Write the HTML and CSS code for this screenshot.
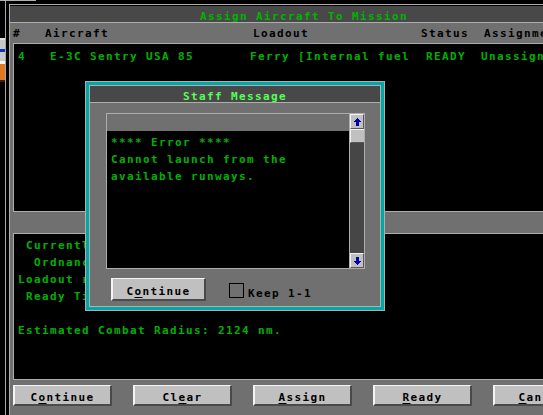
FILE: index.html
```html
<!DOCTYPE html>
<html>
<head>
<meta charset="utf-8">
<title>Assign Aircraft To Mission</title>
<link rel="stylesheet" href="styles.css">
</head>
<body>
<div class="desk">
  <div class="bgline"></div>
  <div class="bgwin">
    <div class="bgwin-panel">
      <div class="bgwin-blue"></div>
      <div class="bgwin-icon"></div>
    </div>
  </div>

  <div class="win">
    <div class="win-title">Assign Aircraft To Mission</div>
    <div class="win-body">
      <div class="head">
        <span>#</span><span>Aircraft</span><span>Loadout</span><span>Status</span><span>Assignment</span>
      </div>
      <div class="list">
        <div class="row">
          <span>4</span><span>E-3C Sentry USA 85</span><span>Ferry [Internal fuel</span><span>READY</span><span>Unassigned</span>
        </div>
      </div>
      <div class="band"></div>
      <div class="info">
        <div class="line"> Currently:</div>
        <div class="line">  Ordnance:</div>
        <div class="line">Loadout role</div>
        <div class="line"> Ready Time:</div>
        <div class="line"> </div>
        <div class="line">Estimated Combat Radius: 2124 nm.</div>
      </div>
      <div class="btnbar">
        <div class="btn">C<u>o</u>ntinue</div>
        <div class="btn">Cl<u>e</u>ar</div>
        <div class="btn"><u>A</u>ssign</div>
        <div class="btn"><u>R</u>eady</div>
        <div class="btn"><u>C</u>ancel</div>
      </div>
    </div>
  </div>

  <div class="dlg">
    <div class="dlg-inner">
      <div class="dlg-title">Staff Message</div>
      <div class="dlg-body">
        <div class="msgbox">
          <div class="msg-main">
            <div class="msg-head"></div>
            <div class="msg-text">
              <div class="line">**** Error ****</div>
              <div class="line">Cannot launch from the</div>
              <div class="line">available runways.</div>
            </div>
          </div>
          <div class="scroll">
            <div class="sbtn">
              <svg width="7" height="8" viewBox="0 0 7 8" shape-rendering="crispEdges"><polygon points="3.5,0 7,4 5,4 5,8 2,8 2,4 0,4" fill="#0000a8"/></svg>
            </div>
            <div class="thumb"></div>
            <div class="track"></div>
            <div class="sbtn">
              <svg width="7" height="8" viewBox="0 0 7 8" shape-rendering="crispEdges"><polygon points="3.5,8 7,4 5,4 5,0 2,0 2,4 0,4" fill="#0000a8"/></svg>
            </div>
          </div>
        </div>
        <div class="dlg-foot">
          <div class="btn dbtn">C<u>o</u>ntinue</div>
          <div class="check"></div>
          <div class="keep">Keep 1-1</div>
        </div>
      </div>
    </div>
  </div>
</div>
</body>
</html>
```

FILE: styles.css
```css
html, body {
  margin: 0;
  padding: 0;
  background: #000;
  overflow: hidden;
}

body {
  width: 543px;
  height: 415px;
  font-family: "DejaVu Sans Mono", "Liberation Mono", monospace;
  font-weight: bold;
  font-size: 11px;
  letter-spacing: 1.38px;
  color: #000;
}

.desk {
  position: relative;
  width: 543px;
  height: 415px;
  overflow: hidden;
  background: #000;
}

/* window peeking from behind on the left */
.bgline {
  position: absolute;
  left: 0;
  top: 0;
  width: 36px;
  height: 1px;
  background: #b0b0b0;
}

.bgwin {
  position: absolute;
  left: 0;
  top: 1px;
  width: 5px;
  height: 414px;
  border-right: 1px solid #a8a8a8;
  background: #000;
}

.bgwin-panel {
  margin-top: 37px;
  height: 42px;
  background: #c8c8c8;
  border-top: 2px solid #e0e0e0;
  display: flex;
  flex-direction: column;
}

.bgwin-blue {
  margin-top: 9px;
  height: 3px;
  background: #1030c0;
}

.bgwin-icon {
  margin-top: 9px;
  height: 16px;
  background: #e07820;
  border-top: 3px solid #f4f4f4;
  border-bottom: 2px solid #402000;
}

/* main window */
.win {
  position: absolute;
  left: 9px;
  top: 4px;
  width: 588px;
  height: 440px;
  border-top: 1px solid #adadad;
  border-left: 1px solid #adadad;
  display: flex;
  flex-direction: column;
  background: #707070;
}

.win-title {
  height: 13px;
  padding-top: 3px;
  line-height: 16px;
  background: #484848;
  border-top: 1px solid #000;
  border-bottom: 1px solid #adadad;
  color: #00b400;
  text-align: center;
  white-space: nowrap;
}

.win-body {
  display: flex;
  flex-direction: column;
  padding-left: 3px;
  background: #707070;
}

.head {
  display: grid;
  grid-template-columns: 32px 208px 168px 63px 1fr;
  height: 19px;
  padding-top: 1px;
  line-height: 20px;
  white-space: nowrap;
}

.list {
  height: 167px;
  background: #000;
  border: 1px solid #adadad;
  border-right: none;
}

.row {
  display: grid;
  grid-template-columns: 32px 200px 176px 55px 1fr;
  padding: 4px 0 0 4px;
  line-height: 17px;
  color: #00b000;
  white-space: nowrap;
}

.band {
  height: 21px;
}

.info {
  height: 142px;
  padding: 3px 0 0 4px;
  background: #000;
  border: 1px solid #adadad;
  border-right: none;
  color: #00b000;
}

.line {
  height: 17px;
  line-height: 17px;
  white-space: pre;
}

.btnbar {
  display: flex;
  gap: 21px;
  padding-top: 5px;
}

.btn {
  box-sizing: border-box;
  width: 99px;
  height: 21px;
  padding-top: 3px;
  line-height: 17px;
  text-align: center;
  background: #c0c0c0;
  border-top: 1px solid #f4f4f4;
  border-left: 2px solid #f4f4f4;
  border-right: 2px solid #4a4a4a;
  border-bottom: 2px solid #4a4a4a;
  color: #000;
  white-space: nowrap;
  flex: none;
}

.btn u {
  text-decoration: underline;
  text-underline-offset: 2px;
}

/* dialog */
.dlg {
  position: absolute;
  left: 85px;
  top: 81px;
  width: 300px;
  height: 230px;
  box-sizing: border-box;
  border: 1px solid #b0b0b0;
  background: #00a8a8;
  padding: 3px;
}

.dlg-inner {
  height: 100%;
  border: 1px solid #b0b0b0;
  box-sizing: border-box;
  display: flex;
  flex-direction: column;
  background: #707070;
}

.dlg-title {
  height: 14px;
  padding-top: 2px;
  line-height: 17px;
  background: #484848;
  border-bottom: 1px solid #adadad;
  color: #55ff55;
  text-align: center;
  white-space: nowrap;
}

.dlg-body {
  flex: 1;
  padding: 10px 0 0 16px;
  background: #707070;
}

.msgbox {
  display: flex;
  width: 257px;
  height: 154px;
  border: 1px solid #adadad;
}

.msg-main {
  flex: 1;
  display: flex;
  flex-direction: column;
}

.msg-head {
  height: 17px;
  background: #707070;
}

.msg-text {
  flex: 1;
  background: #000;
  padding: 3px 0 0 4px;
  color: #00b000;
}

.scroll {
  width: 14px;
  border-left: 1px solid #adadad;
  display: flex;
  flex-direction: column;
}

.sbtn {
  box-sizing: border-box;
  height: 15px;
  background: #c0c0c0;
  border-top: 1px solid #f4f4f4;
  border-left: 1px solid #f4f4f4;
  border-right: 1px solid #585858;
  border-bottom: 1px solid #585858;
  display: flex;
  align-items: center;
  justify-content: center;
}

.thumb {
  box-sizing: border-box;
  height: 14px;
  background: #c0c0c0;
  border-top: 1px solid #f4f4f4;
  border-left: 1px solid #f4f4f4;
  border-bottom: 1px solid #585858;
}

.track {
  flex: 1;
  background: #464646;
}

.dlg-foot {
  display: flex;
  align-items: center;
  margin-top: 8px;
  padding-left: 5px;
}

.dbtn {
  width: 95px;
  height: 23px;
  padding-top: 4px;
}

.check {
  box-sizing: border-box;
  width: 15px;
  height: 15px;
  margin-left: 23px;
  margin-top: 2px;
  border: 1px solid #000;
  background: #707070;
}

.keep {
  margin-left: 4px;
  padding-top: 8px;
  line-height: 17px;
  white-space: nowrap;
}
```
